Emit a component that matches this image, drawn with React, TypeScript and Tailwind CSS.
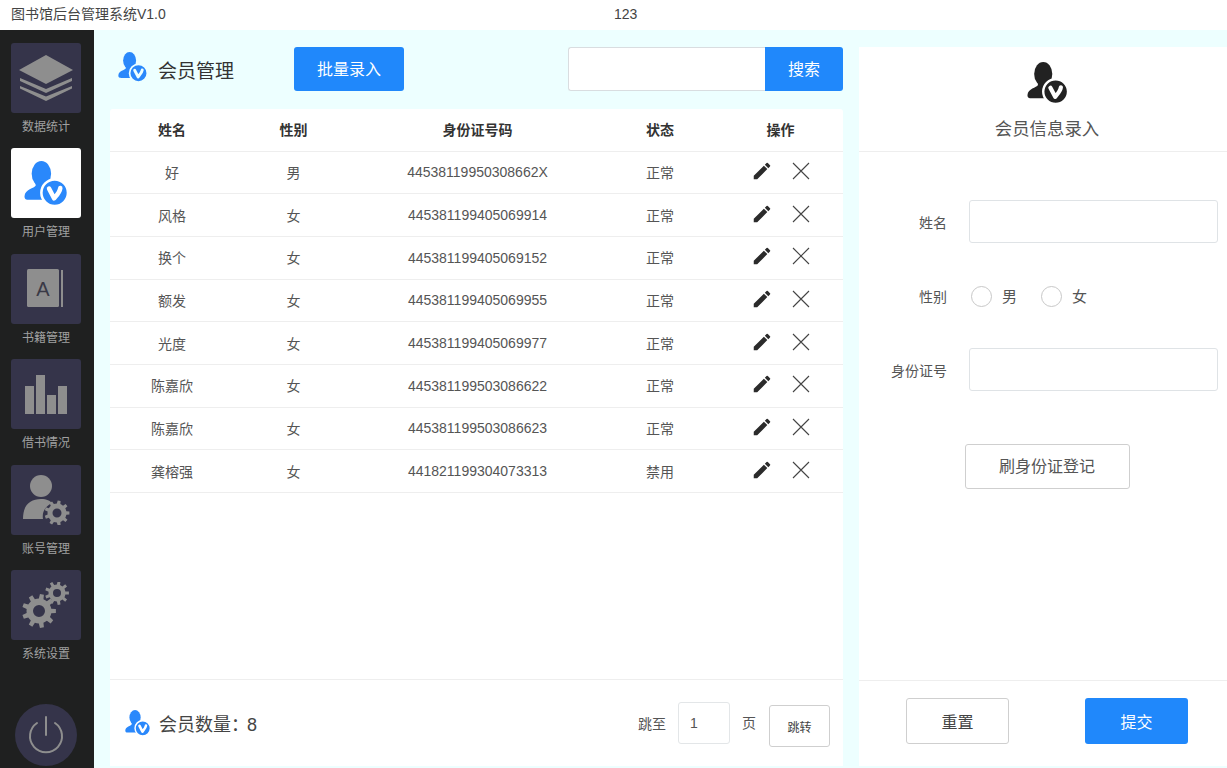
import React from "react";
import { MdEdit } from "react-icons/md";

const members = [
  { name: "好", sex: "男", id: "44538119950308662X", status: "正常" },
  { name: "风格", sex: "女", id: "445381199405069914", status: "正常" },
  { name: "换个", sex: "女", id: "445381199405069152", status: "正常" },
  { name: "额发", sex: "女", id: "445381199405069955", status: "正常" },
  { name: "光度", sex: "女", id: "445381199405069977", status: "正常" },
  { name: "陈嘉欣", sex: "女", id: "445381199503086622", status: "正常" },
  { name: "陈嘉欣", sex: "女", id: "445381199503086623", status: "正常" },
  { name: "龚榕强", sex: "女", id: "441821199304073313", status: "禁用" },
];

const cols = "grid grid-cols-[124px_119px_249px_116px_125px] items-center text-center";

function gearPath(cx: number, cy: number, R: number, r: number, hole: number, teeth: number) {
  let d = "";
  const step = (Math.PI * 2) / teeth;
  for (let i = 0; i < teeth; i++) {
    const a = i * step;
    const pts = [
      [r, a - step * 0.5],
      [r, a - step * 0.27],
      [R, a - step * 0.17],
      [R, a + step * 0.17],
      [r, a + step * 0.27],
    ];
    pts.forEach(([rad, ang], j) => {
      const x = (cx + rad * Math.cos(ang)).toFixed(2);
      const y = (cy + rad * Math.sin(ang)).toFixed(2);
      d += (i === 0 && j === 0 ? "M" : "L") + x + " " + y + " ";
    });
  }
  d += "Z ";
  d += `M${cx + hole} ${cy} A${hole} ${hole} 0 1 0 ${cx - hole} ${cy} A${hole} ${hole} 0 1 0 ${cx + hole} ${cy} Z`;
  return d;
}

function UserBadge({ size, ring, className }: { size: number; ring: string; className?: string }) {
  return (
    <svg width={size} height={size} viewBox="0 0 44 44" fill="currentColor" className={className}>
      <ellipse cx="17" cy="12.5" rx="9.5" ry="12.5" />
      <path d="M11 20 L11.5 24 C10 27 1 27.5 0.5 34.5 C0.5 37.5 2 38 5 38 L26 38 L30 27 C26 26 23 26 22.5 24 L23 20 Z" />
      <circle cx="30" cy="31" r="13" stroke={ring} strokeWidth="2.5" />
      <path d="M24.5 27 L29.5 36.5 C32 33.5 35 30.5 35.5 26.5" fill="none" stroke={ring} strokeWidth="4.4" strokeLinecap="round" strokeLinejoin="round" />
    </svg>
  );
}

function LayersIcon() {
  return (
    <svg width="56" height="46" viewBox="0 0 56 46" fill="currentColor">
      <path d="M28 0 L55 15 L28 29 L1 15 Z" />
      <path d="M2 23 L28 34 L54 23 L54 26 L28 38 L2 26 Z" />
      <path d="M2 31 L28 41.5 L54 31 L54 33.5 L28 46 L2 33.5 Z" />
    </svg>
  );
}

function BookIcon() {
  return (
    <svg width="38" height="40" viewBox="0 0 38 40">
      <rect x="0" y="0" width="32" height="38" rx="1.5" fill="currentColor" />
      <rect x="34" y="1" width="2" height="37" fill="currentColor" />
      <text x="16" y="27" textAnchor="middle" fontSize="20" fontFamily="Liberation Sans" fill="#3a3946">
        A
      </text>
    </svg>
  );
}

function BarsIcon() {
  return (
    <svg width="42" height="39" viewBox="0 0 42 39" fill="currentColor">
      <rect x="0" y="11" width="9" height="28" />
      <rect x="11" y="0" width="9" height="39" />
      <rect x="22" y="20" width="9" height="19" />
      <rect x="33" y="11" width="9" height="28" />
    </svg>
  );
}

function UserGearIcon() {
  return (
    <svg width="48" height="50" viewBox="0 0 48 50" fill="currentColor">
      <circle cx="19" cy="11" r="11" />
      <path d="M1 44 C1 30 8 24 19 24 C25 24 28 26 30 28 C22 32 20 38 21 44 Z" />
      <path fillRule="evenodd" d={gearPath(35, 38, 12.5, 9.5, 4.5, 9)} />
    </svg>
  );
}

function GearsIcon() {
  return (
    <svg width="48" height="46" viewBox="0 0 48 46" fill="currentColor">
      <path fillRule="evenodd" d={gearPath(17, 29, 17, 12.5, 6, 9)} />
      <path fillRule="evenodd" d={gearPath(35, 11, 12, 8.5, 4, 9)} />
    </svg>
  );
}

const nav = [
  { label: "数据统计", icon: <LayersIcon /> },
  { label: "用户管理", icon: <UserBadge size={45} ring="#ffffff" />, active: true },
  { label: "书籍管理", icon: <BookIcon /> },
  { label: "借书情况", icon: <BarsIcon /> },
  { label: "账号管理", icon: <UserGearIcon /> },
  { label: "系统设置", icon: <GearsIcon /> },
];

function Sidebar() {
  return (
    <aside className="w-[94px] shrink-0 bg-[#1f2020] flex flex-col items-start pl-[11px] pt-[13px]">
      {nav.map((item) => (
        <div key={item.label} className="h-[105.4px] flex flex-col items-center">
          <div
            className={
              item.active
                ? "w-[70px] h-[70px] rounded-[3px] bg-white text-[#2a88fb] flex items-center justify-center"
                : "w-[70px] h-[70px] rounded-[3px] bg-[#35344a] text-[#8e8e8e] flex items-center justify-center"
            }
          >
            {item.icon}
          </div>
          <span className="mt-[5px] text-xs leading-[18px] text-[#a0a0a0]">{item.label}</span>
        </div>
      ))}
      <div className="mt-auto mb-[2px] ml-[4px] w-[62px] h-[62px] rounded-full bg-[#35344a] flex items-center justify-center">
        <svg width="36" height="38" viewBox="0 0 36 38" fill="none" stroke="#8e8e8e" strokeWidth="2" strokeLinecap="round">
          <path d="M18 1 L18 19" />
          <path d="M9 7 A16 16 0 1 0 27 7" />
        </svg>
      </div>
    </aside>
  );
}

function CloseIcon() {
  return (
    <svg width="18" height="18" viewBox="0 0 18 18" stroke="#444" strokeWidth="1.1" fill="none">
      <path d="M1 1 L17 17 M17 1 L1 17" />
    </svg>
  );
}

function MemberPanel() {
  return (
    <section className="w-[733px] shrink-0 flex flex-col">
      <div className="h-[44px] flex items-center">
        <div className="w-[184px] flex items-center pl-2">
          <UserBadge size={30} ring="#edffff" className="text-[#2a88fb] -mt-1" />
          <h1 className="ml-[10px] pt-[6px] text-[19px] text-[#333]">会员管理</h1>
        </div>
        <button className="w-[110px] h-[44px] pt-[2px] rounded-[3px] bg-[#2088fb] text-white text-base">批量录入</button>
        <div className="ml-auto flex">
          <input className="w-[197px] h-[44px] bg-white border border-[#d9dde0] border-r-0 rounded-l-[3px] outline-none" />
          <button className="w-[78px] h-[44px] pt-[2px] rounded-r-[3px] bg-[#2088fb] text-white text-base">搜索</button>
        </div>
      </div>

      <div className="mt-[18px] flex-1 bg-white rounded-t-[3px] flex flex-col">
        <div className={cols + " h-[42.5px] border-b border-[#eeeeee] font-bold text-sm text-[#333]"}>
          <span>姓名</span>
          <span>性别</span>
          <span>身份证号码</span>
          <span>状态</span>
          <span>操作</span>
        </div>
        {members.map((m) => (
          <div key={m.id} className={cols + " h-[42.7px] pt-[1px] border-b border-[#eeeeee] text-sm text-[#555]"}>
            <span>{m.name}</span>
            <span>{m.sex}</span>
            <span className="-mt-[1px]">{m.id}</span>
            <span>{m.status}</span>
            <span className="flex items-center justify-center gap-[19px] -mt-[4px]">
              <MdEdit size={22} className="text-[#2b2b2b]" />
              <CloseIcon />
            </span>
          </div>
        ))}
        <div className="mt-auto h-[87px] border-t border-[#eeeeee] flex items-center pl-[15px] pr-[13px]">
          <UserBadge size={26} ring="#ffffff" className="text-[#2a88fb]" />
          <span className="ml-[8px] pt-[3px] text-lg text-[#444]">
            会员数量：<span className="-ml-[2px]">8</span>
          </span>
          <span className="ml-auto pt-[2px] text-sm text-[#555]">跳至</span>
          <input
            defaultValue="1"
            className="ml-3 w-[52px] h-[42px] px-[11px] text-sm text-[#555] border border-[#e3e6e8] rounded-[3px] outline-none"
          />
          <span className="ml-3 text-sm text-[#555]">页</span>
          <button className="ml-[13px] mt-[6px] w-[61px] h-[42px] pt-[3px] border border-[#cfcfcf] rounded-[3px] text-xs text-[#444]">跳转</button>
        </div>
      </div>
    </section>
  );
}

function FormRow({
  label,
  children,
  className,
  labelClass = "pt-[3px]",
}: {
  label: string;
  children: React.ReactNode;
  className?: string;
  labelClass?: string;
}) {
  return (
    <div className={"flex items-center " + (className ?? "")}>
      <label className={"w-[88px] text-right text-sm text-[#555] " + labelClass}>{label}</label>
      <div className="ml-[22px]">{children}</div>
    </div>
  );
}

function Radio({ label }: { label: string }) {
  return (
    <span className="flex items-center gap-[10px] text-[15px] leading-[21px] text-[#555]">
      <span className="w-[21px] h-[21px] rounded-full border border-[#c8c8c8] bg-white" />
      {label}
    </span>
  );
}

function EntryPanel() {
  return (
    <section className="flex-1 bg-white flex flex-col">
      <div className="h-[105px] border-b border-[#eeeeee] flex flex-col items-center pl-2 pt-[15px]">
        <UserBadge size={42} ring="#ffffff" className="text-[#222] ml-[2px]" />
        <h2 className="mt-[12px] text-[17.4px] leading-[26px] text-[#555]">会员信息录入</h2>
      </div>
      <div className="flex-1 flex flex-col">
        <FormRow label="姓名" className="mt-[48px]">
          <input className="w-[249px] h-[43px] border border-[#dfe3e6] rounded-[3px] outline-none" />
        </FormRow>
        <FormRow label="性别" className="mt-[43px]" labelClass="pt-[1px]">
          <div className="flex gap-[24px] pl-[2px]">
            <Radio label="男" />
            <Radio label="女" />
          </div>
        </FormRow>
        <FormRow label="身份证号" className="mt-[41px]">
          <input className="w-[249px] h-[43px] border border-[#dfe3e6] rounded-[3px] outline-none" />
        </FormRow>
        <button className="mt-[53px] self-center ml-[8px] w-[165px] h-[45px] pt-[1px] border border-[#cfcfcf] rounded-[3px] text-base text-[#555]">
          刷身份证登记
        </button>
      </div>
      <div className="h-[86px] border-t border-[#eeeeee] flex items-start pt-[17px] pl-[47px]">
        <button className="w-[103px] h-[46px] pt-[3px] border border-[#cfcfcf] rounded-[3px] text-base text-[#444]">重置</button>
        <button className="ml-[76px] w-[103px] h-[46px] pt-[3px] rounded-[3px] bg-[#2088fb] text-white text-base">提交</button>
      </div>
    </section>
  );
}

export default function App() {
  return (
    <div className="w-[1227px] h-[768px] overflow-hidden flex flex-col bg-white font-['Liberation_Sans','Noto_Sans_CJK_SC',sans-serif]">
      <header className="h-[30px] shrink-0 flex items-center pl-[11px] text-sm text-[#444] pb-[2px]">
        <span className="w-[603px]">图书馆后台管理系统V1.0</span>
        <span>123</span>
      </header>
      <div className="flex-1 flex min-h-0">
        <Sidebar />
        <main className="flex-1 flex gap-4 bg-[#edffff] pt-[17px] pb-[2px] pl-4">
          <MemberPanel />
          <EntryPanel />
        </main>
      </div>
    </div>
  );
}
